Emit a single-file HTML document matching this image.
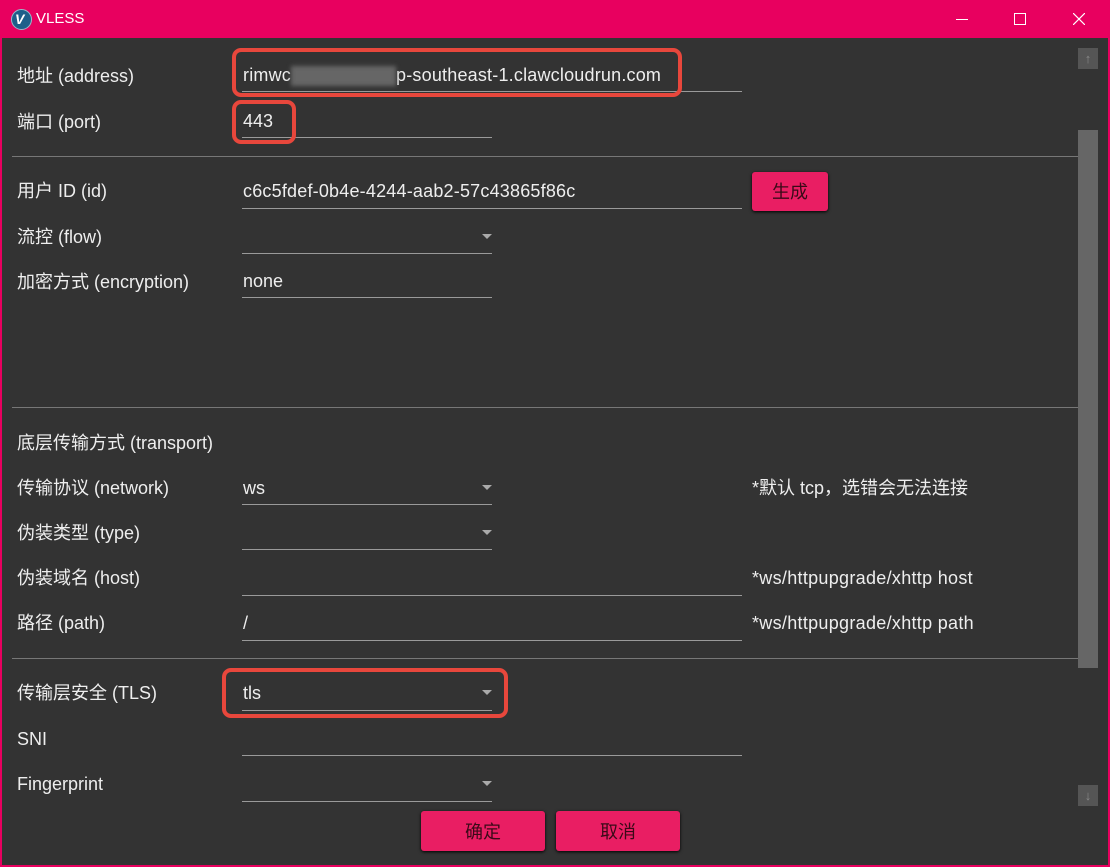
<html><head><style>
body{margin:0;width:1110px;height:867px;background:#e8005f;overflow:hidden;font-family:"Liberation Sans","Noto Sans CJK SC",sans-serif;position:relative}
#m{position:absolute;left:2px;top:38px;width:1106px;height:827px;background:#333}
.t{position:absolute;color:#eee;font-size:18px;line-height:22px;white-space:nowrap}
.u{position:absolute;height:1px;background:#9a9a9a}
.d{position:absolute;left:12px;width:1066px;height:1px;background:#777}
.a{position:absolute;width:0;height:0;border-left:5px solid transparent;border-right:5px solid transparent;border-top:5px solid #aaa}
.r{position:absolute;border:4px solid #e8473c;border-radius:9px;box-sizing:border-box}
.b{position:absolute;background:#e91e63;border-radius:3px;box-shadow:0 1px 3px #000;color:#3a0a18;font-size:18px;text-align:center;font-family:"Noto Sans CJK SC",sans-serif}
</style></head><body>
<div style="position:absolute;left:11px;top:9px;width:19px;height:19px;border-radius:50%;background:#1e5f8a;border:1px solid #9bc"></div>
<div class="t" style="left:15px;top:8px;color:#fff;font-weight:bold;font-style:italic;font-size:14px">V</div>
<div class="t" style="left:36px;top:8px;color:#fff;font-size:15px">VLESS</div>
<div style="position:absolute;left:956px;top:19px;width:12px;height:1px;background:#fff"></div>
<div style="position:absolute;left:1014px;top:13px;width:10px;height:10px;border:1px solid #fff"></div>
<svg style="position:absolute;left:1073px;top:13px" width="12" height="12"><path d="M0 0L12 12M12 0L0 12" stroke="#fff" stroke-width="1.2"/></svg>
<div id="m"></div>
<div style="position:absolute;left:1078px;top:48px;width:20px;height:21px;background:#555;color:#888;font-size:13px;text-align:center;line-height:21px">↑</div>
<div style="position:absolute;left:1078px;top:130px;width:20px;height:538px;background:#666"></div>
<div style="position:absolute;left:1078px;top:785px;width:20px;height:21px;background:#555;color:#888;font-size:13px;text-align:center;line-height:21px">↓</div>
<div class="d" style="top:156px"></div><div class="d" style="top:407px"></div><div class="d" style="top:658px"></div>

<div class="t" style="left:17px;top:65px">地址 (address)</div>
<div class="t" style="left:243px;top:64px;letter-spacing:0.2px">rimwc<span style="display:inline-block;width:105px;height:20px;background:#666;vertical-align:middle;filter:blur(2px)"></span>p-southeast-1.clawcloudrun.com</div>
<div class="u" style="left:242px;top:91px;width:500px"></div>
<div class="t" style="left:17px;top:111px">端口 (port)</div>
<div class="t" style="left:243px;top:110px">443</div>
<div class="u" style="left:242px;top:137px;width:250px"></div>

<div class="t" style="left:17px;top:180px">用户 ID (id)</div>
<div class="t" style="left:243px;top:180px;letter-spacing:0.2px">c6c5fdef-0b4e-4244-aab2-57c43865f86c</div>
<div class="u" style="left:242px;top:208px;width:500px"></div>
<div class="b" style="left:752px;top:172px;width:76px;height:39px;line-height:39px">生成</div>
<div class="t" style="left:17px;top:226px">流控 (flow)</div>
<div class="a" style="left:482px;top:234px"></div>
<div class="u" style="left:242px;top:253px;width:250px"></div>
<div class="t" style="left:17px;top:271px">加密方式 (encryption)</div>
<div class="t" style="left:243px;top:270px">none</div>
<div class="u" style="left:242px;top:297px;width:250px"></div>

<div class="t" style="left:17px;top:432px">底层传输方式 (transport)</div>
<div class="t" style="left:17px;top:477px">传输协议 (network)</div>
<div class="t" style="left:243px;top:477px">ws</div>
<div class="a" style="left:482px;top:485px"></div>
<div class="u" style="left:242px;top:504px;width:250px"></div>
<div class="t" style="left:752px;top:477px">*默认 tcp，选错会无法连接</div>
<div class="t" style="left:17px;top:522px">伪装类型 (type)</div>
<div class="a" style="left:482px;top:530px"></div>
<div class="u" style="left:242px;top:549px;width:250px"></div>
<div class="t" style="left:17px;top:567px">伪装域名 (host)</div>
<div class="u" style="left:242px;top:595px;width:500px"></div>
<div class="t" style="left:752px;top:567px;letter-spacing:0.3px">*ws/httpupgrade/xhttp host</div>
<div class="t" style="left:17px;top:612px">路径 (path)</div>
<div class="t" style="left:243px;top:612px">/</div>
<div class="u" style="left:242px;top:640px;width:500px"></div>
<div class="t" style="left:752px;top:612px;letter-spacing:0.3px">*ws/httpupgrade/xhttp path</div>

<div class="t" style="left:17px;top:682px">传输层安全 (TLS)</div>
<div class="t" style="left:243px;top:682px">tls</div>
<div class="a" style="left:482px;top:690px"></div>
<div class="u" style="left:242px;top:710px;width:250px"></div>
<div class="t" style="left:17px;top:728px">SNI</div>
<div class="u" style="left:242px;top:755px;width:500px"></div>
<div class="t" style="left:17px;top:773px">Fingerprint</div>
<div class="a" style="left:482px;top:781px"></div>
<div class="u" style="left:242px;top:801px;width:250px"></div>

<div class="b" style="left:421px;top:811px;width:124px;height:40px;line-height:40px">确定</div>
<div class="b" style="left:556px;top:811px;width:124px;height:40px;line-height:40px">取消</div>

<div class="r" style="left:232px;top:48px;width:450px;height:49px"></div>
<div class="r" style="left:232px;top:100px;width:64px;height:44px"></div>
<div class="r" style="left:222px;top:668px;width:286px;height:50px"></div>
</body></html>
